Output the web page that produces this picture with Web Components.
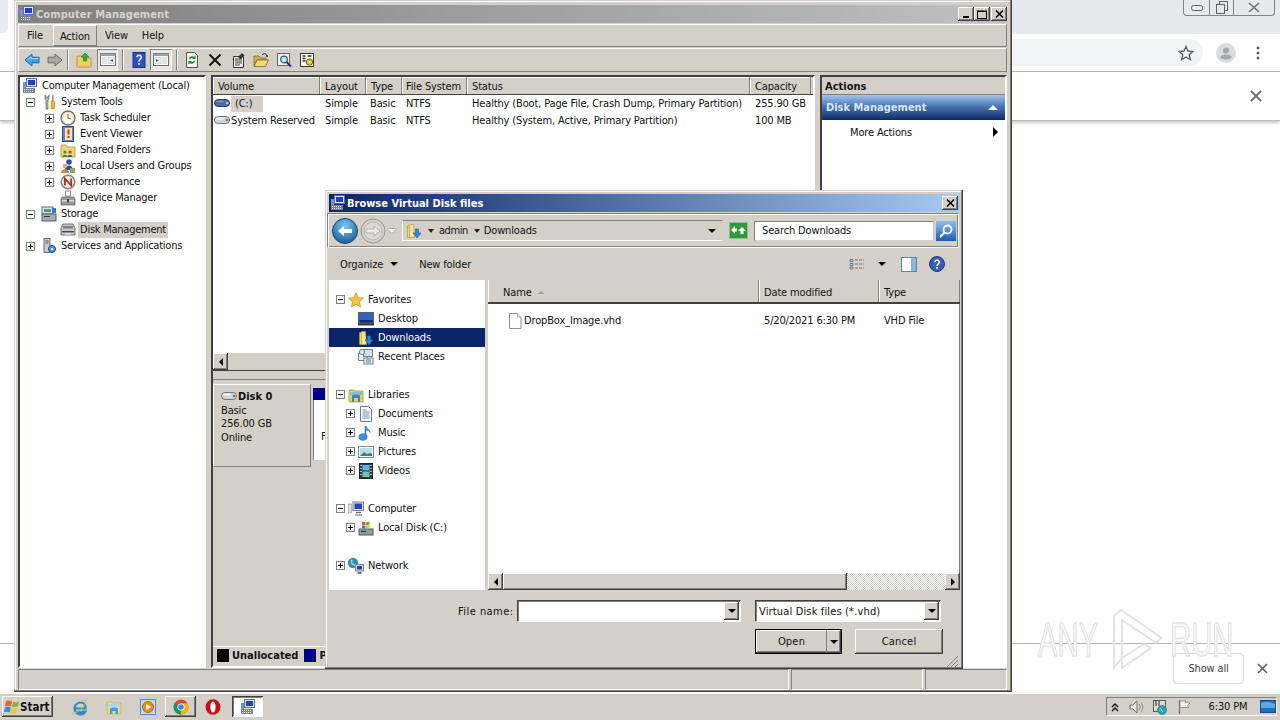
<!DOCTYPE html>
<html>
<head>
<meta charset="utf-8">
<title>Computer Management</title>
<style>
    html, body { margin: 0; padding: 0; width: 1280px; height: 720px; overflow: hidden; background: #fff; }
    body { position: relative; display: flex; flex-direction: column; font: 11px "DejaVu Sans Condensed", "DejaVu Sans", sans-serif; color: #111; letter-spacing: -.15px; }
</style>
</head>
<body>
<browser-backdrop></browser-backdrop>
<task-bar></task-bar>
<mmc-window></mmc-window>
<browse-dialog></browse-dialog>

<script>
// shared bits, pasted into each shadow root's own style
const BASE = `
    * { box-sizing: border-box; }
    :host { box-sizing: border-box; }
    .raised { background: #d4d0c8; box-shadow: inset -1px -1px 0 #404040, inset 1px 1px 0 #fff, inset -2px -2px 0 #808080; }
    .sunken { box-shadow: inset 1px 1px 0 #808080, inset -1px -1px 0 #fff, inset 2px 2px 0 #404040; }
    .tri-down { width: 0; height: 0; border-left: 4px solid transparent; border-right: 4px solid transparent; border-top: 4px solid #000; }
`;

const ICONS = {
    mmc: `<path d="M1 4h3v6H1z" fill="#6d92e0"/><rect x="4.500" y=".5" width="10" height="8" fill="#dbe2f5" stroke="#5a6ea8"/><rect x="6" y="2" width="7" height="5" fill="#2340b8"/><rect x="1" y="10" width="12" height="5" fill="#7d828c"/><path d="M2 11.500h10M2 13.500h10" stroke="#e6e8ec" stroke-dasharray="1 1"/>`,
    tools: `<path d="M4 1v4l1 1v9h2V6l1-1V1L7 3H5z" fill="#b4b4b4" stroke="#555" stroke-width=".6"/><rect x="10" y="7" width="3.500" height="8" rx="1" fill="#f0c010" stroke="#8a6a00" stroke-width=".5"/><rect x="11.200" y="1" width="1.200" height="6" fill="#777"/>`,
    clock: `<circle cx="8" cy="8" r="7" fill="#efe9d6" stroke="#77725f" stroke-width="1.400"/><circle cx="8" cy="8" r="5" fill="#fbfaf2"/><path d="M8 4v4l3 1" fill="none" stroke="#a87838" stroke-width="1.200"/>`,
    event: `<rect x="2.500" y=".5" width="11" height="15" fill="#6a84c8" stroke="#38488a"/><rect x="5" y="2" width="7" height="12" fill="#f4e6b0"/><path d="M8.500 3.500v5" stroke="#c83a20" stroke-width="2"/><rect x="7.500" y="10" width="2" height="2" fill="#c83a20"/>`,
    shared: `<path d="M1 3h5l1 2h8v10H1z" fill="#f2d576" stroke="#a98a34" stroke-width=".7"/><circle cx="5" cy="10" r="1.600" fill="#3a9a3a"/><path d="M2.500 15c0-3 5-3 5 0z" fill="#3a9a3a"/><circle cx="10" cy="10" r="1.600" fill="#c04838"/><path d="M7.500 15c0-3 5-3 5 0z" fill="#3858b0"/>`,
    users: `<circle cx="9" cy="4" r="2.800" fill="#2c4ea8"/><path d="M5 12c0-6 8-6 8 0z" fill="#2c4ea8"/><circle cx="5" cy="8" r="2.300" fill="#e0a860"/><path d="M1 15c0-5 8-5 8 0z" fill="#c88c30"/><path d="M10 10h5v5h-5z" fill="#8aa868"/>`,
    perf: `<circle cx="8" cy="8" r="6.800" fill="#f4f0e8" stroke="#8c8678" stroke-width="1.600"/><path d="M4.800 11.500v-7l6.400 7v-7" fill="none" stroke="#c82018" stroke-width="1.800"/>`,
    device: `<rect x="5.500" y="1" width="5" height="5" fill="none" stroke="#8a8a8a"/><path d="M2 7h12l1 2v6H1V9z" fill="#9a9c9e" stroke="#55585c" stroke-width=".7"/><rect x="2" y="10" width="12" height="1.400" fill="#dcdcdc"/><rect x="7" y="9" width="2" height="3.500" fill="#444"/>`,
    storage: `<rect x="1" y="1" width="11" height="7" fill="#dfe3e6" stroke="#6a6f74"/><rect x="3" y="3" width="7" height="3" fill="#32a0a8"/><rect x="1" y="8" width="14" height="7" fill="#a8adb2" stroke="#5a5f64"/><rect x="3" y="10" width="6" height="1" fill="#333"/><rect x="11" y="2" width="4" height="5" fill="#3a78c8"/>`,
    diskmgmt: `<path d="M3 2h10l2 4v7H1V6z" fill="#c6c8ca" stroke="#55585c" stroke-width=".8"/><rect x="3" y="4" width="10" height="2.500" fill="#7e8286"/><rect x="2" y="9" width="12" height="1.400" fill="#45484c"/><rect x="5" y="11.500" width="6" height="1" fill="#f4f4f4"/>`,
    services: `<rect x="3" y=".5" width="6" height="14" fill="#c8ccd0" stroke="#6a6e74"/><path d="M4.500 3h3M4.500 5h3" stroke="#555"/><circle cx="11" cy="11" r="3.600" fill="#4a8cc8" stroke="#2a5a94"/><circle cx="11" cy="11" r="1.300" fill="#dff0fa"/>`,
    back: `<path d="M1 8l7-6v3.200h7v5.600H8V14z" fill="#3ba4e4" stroke="#1d66ad"/><path d="M3.500 8L7 5v1.500h7" fill="none" stroke="#a8e0fa"/>`,
    fwd: `<path d="M15 8L8 2v3.200H1v5.600h7V14z" fill="#aba99f" stroke="#6f6d64"/>`,
    up: `<path d="M1 4h5l1 2h8v9H1z" fill="#f1cf63" stroke="#a58430" stroke-width=".7"/><path d="M9 1l4 4h-2.400v4H7.400V5H5z" fill="#3aa83a" stroke="#1f7a1f" stroke-width=".6"/>`,
    paneleft: `<rect x="1.500" y="2.500" width="15" height="12" fill="#fff" stroke="#6e6e6e"/><rect x="1.500" y="2.500" width="15" height="2.500" fill="#9aa0a8"/><rect x="3" y="6" width="5" height="7" fill="#dfe4ea"/><path d="M9 6.500h6v6H9z" fill="#f2f2f2" stroke="#b0b0b0" stroke-width=".5"/><path d="M14 8l-3 1.500 3 1.500z" fill="#2f7a4a"/>`,
    paneright: `<rect x="1.500" y="2.500" width="15" height="12" fill="#fff" stroke="#6e6e6e"/><rect x="1.500" y="2.500" width="15" height="2.500" fill="#9aa0a8"/><rect x="10" y="6" width="5" height="7" fill="#dfe4ea"/><path d="M3 6.500h6v6H3z" fill="#f2f2f2" stroke="#b0b0b0" stroke-width=".5"/><path d="M4 8l3 1.500-3 1.500z" fill="#2f7a4a"/>`,
    helpbook: `<rect x="2" y=".5" width="12" height="15" fill="#2b50c4" stroke="#182f84"/><path d="M6 5.300a2.100 2.100 0 1 1 3.200 1.800C8.200 7.700 8 8.200 8 9.600" fill="none" stroke="#fff" stroke-width="1.500"/><rect x="7.200" y="11" width="1.600" height="1.800" fill="#fff"/>`,
    refresh: `<path d="M2.500.5h8l3 3v12h-11z" fill="#f4f8f0" stroke="#555"/><path d="M5.500 7a3 3 0 0 1 5-1M10.500 9a3 3 0 0 1-5 1" fill="none" stroke="#1a8a2e" stroke-width="1.500"/><path d="M11.500 3.500v3.500H8zM4.500 12.500V9H8z" fill="#1a8a2e"/>`,
    del: `<path d="M2.500 2.500l11 11M13.500 2.500l-11 11" stroke="#111" stroke-width="1.900"/>`,
    props: `<path d="M3.500 4.500h10v11h-10z" fill="#fff" stroke="#333"/><path d="M5 7h7M5 9h7M5 11h7M5 13h5" stroke="#333"/><path d="M8 5l4-4 2.500 2.500-4 4z" fill="#333"/>`,
    open: `<path d="M1 4h5l1 2h6v2H4L1 14z" fill="#d8b448" stroke="#6e5a1c" stroke-width=".7"/><path d="M4 8h11.500l-3 6.500H1z" fill="#f2d878" stroke="#6e5a1c" stroke-width=".7"/><path d="M9 3c2-2 4-2 5 1" fill="none" stroke="#222"/><path d="M15 5l-2.500-.5 2-1.500z" fill="#222"/>`,
    find: `<rect x="1.500" y="1.500" width="12" height="12" fill="#f4f2e8" stroke="#666"/><circle cx="8" cy="7.500" r="3.300" fill="#bfe6f2" stroke="#225a7a" stroke-width="1.200"/><path d="M10.500 10l4.500 4.500" stroke="#2a2a9a" stroke-width="2"/>`,
    gearlist: `<rect x="1.500" y="1.500" width="13" height="13" fill="#fff" stroke="#333"/><path d="M3.500 4h3M3.500 6.500h3M3.500 9h3M8.500 4h4" stroke="#333" stroke-width="1.400"/><circle cx="10.500" cy="10" r="3.200" fill="#e8c020" stroke="#7a6400"/><circle cx="10.500" cy="10" r="1" fill="#fff"/>`,
    hddblue: `<rect x=".5" y="3.500" width="15" height="7" rx="3.500" fill="#4a6a98" stroke="#2c4468"/><ellipse cx="6" cy="5.500" rx="4" ry="1.200" fill="#6d8cb6"/><circle cx="13" cy="7" r="1.300" fill="#b8c8dc"/>`,
    hddgray: `<rect x=".5" y="3.500" width="15" height="7" rx="3.500" fill="#d4d5d6" stroke="#77797c"/><ellipse cx="6" cy="5.500" rx="4" ry="1.200" fill="#f2f2f2"/><circle cx="13" cy="7" r="1.300" fill="#707274"/>`,
    star: `<path d="M8 .8l2.200 4.800 5.200.6-3.900 3.500 1.100 5.200L8 12.300l-4.600 2.600 1.100-5.200L.6 6.200l5.200-.6z" fill="#f4c14a" stroke="#c88a20" stroke-width=".7"/>`,
    desktop: `<rect x=".5" y="1.500" width="15" height="11" fill="#2f62b8" stroke="#5a6068"/><rect x="1.500" y="9" width="13" height="2.500" fill="#10306c"/><rect x="0" y="12.500" width="16" height="2" fill="#3a3c40"/>`,
    folderdl: `<path d="M1.500 2.500h5v2l1 10h-6z" fill="#f4d86c" stroke="#b3963c" stroke-width=".6"/><path d="M3.500 1.500h4l1 13h-5z" fill="#f8e68c" stroke="#b3963c" stroke-width=".6"/><path d="M9.500 6h3v4h2.500L11 15l-4-5h2.500z" fill="#2a8ae0" stroke="#145aa8" stroke-width=".6"/>`,
    recent: `<rect x=".5" y="4.500" width="9" height="7" fill="#e8eef4" stroke="#7a8088"/><rect x="5.500" y=".5" width="9" height="7" fill="#d0e0f0" stroke="#7a8088"/><circle cx="4" cy="3" r="2.600" fill="#dfe6ee" stroke="#708090"/><rect x="6" y="9" width="9" height="6" fill="#eef2f6" stroke="#7a8088"/><path d="M8 11h5M8 13h5" stroke="#4a78a8"/>`,
    libs: `<path d="M1 3h5l1 1h8v11H1z" fill="#f0cc60" stroke="#a98a34" stroke-width=".7"/><path d="M2 5h12v3H2z" fill="#7cc4dc"/><path d="M4 15V9c0-2 8-2 8 0v6h-2v-4H6v4z" fill="#3a88b0"/>`,
    docs: `<path d="M2.500.5h8l3 3v12h-11z" fill="#f6f8fb" stroke="#6e7f94"/><path d="M4.500 4h4M4.500 6h7M4.500 8h7M4.500 10h7M4.500 12h7" stroke="#7c93ad"/>`,
    music: `<path d="M7.500 1v10.500" stroke="#2a78c0" stroke-width="1.600"/><ellipse cx="5" cy="12" rx="4.200" ry="3.300" fill="#3a90d8" stroke="#1a5a9c" stroke-width=".5"/><path d="M8 1c1 3 5 3.500 4.500 8-.5-2.500-2.500-3.500-4.500-3.500z" fill="#3a90d8"/>`,
    pics: `<rect x=".5" y="2.500" width="15" height="11" fill="#fff" stroke="#7a8a9a"/><rect x="2" y="4" width="12" height="8" fill="#bcdcec"/><path d="M2 12l4-4 3 2 3-1 2 1v2z" fill="#2e8a64"/>`,
    videos: `<rect x="1.500" y=".5" width="13" height="15" fill="#2a3c50" stroke="#182430"/><rect x="4.500" y="2" width="7" height="5.500" fill="#58b8d8"/><rect x="4.500" y="8.500" width="7" height="5.500" fill="#78c8a8"/><path d="M3 2v1M3 5v1M3 8v1M3 11v1M13 2v1M13 5v1M13 8v1M13 11v1" stroke="#e0e8f0" stroke-width="1.500"/>`,
    computer: `<rect x=".5" y="3" width="3" height="9" fill="#dfe3e8" stroke="#8a9098" stroke-width=".6"/><rect x="5" y="1" width="10.500" height="8.500" fill="#dbe2ea" stroke="#7a828c"/><rect x="6.500" y="2.500" width="7.500" height="5.500" fill="#2344c0"/><path d="M8 11.500h5" stroke="#777" stroke-width="1.500"/><path d="M7 14h7" stroke="#999" stroke-width="1.500"/>`,
    localdisk: `<rect x="1" y="9" width="14" height="6" fill="#8a9ca4" stroke="#4a5a64"/><rect x="3" y="11" width="5" height="1" fill="#25323a"/><path d="M4 1.500l3.500.8v3L4 4.800z" fill="#e05a2c"/><path d="M8 2.400l3.500-1v3l-3.500 1z" fill="#6ab02c"/><path d="M4 5.300l3.500.5v3L4 8.200z" fill="#2c80d8"/><path d="M8 5.800l3.500-.8v3l-3.500.8z" fill="#f0c020"/>`,
    network: `<circle cx="5" cy="5" r="4.800" fill="#2a90c0" stroke="#14607e" stroke-width=".5"/><path d="M3 2c2 1 0 3 1 4s3 0 3 2" fill="none" stroke="#aee08a" stroke-width="1.500"/><rect x="7.500" y="6.500" width="8" height="6.500" fill="#dde4ec" stroke="#70808c"/><rect x="9" y="8" width="5" height="3.500" fill="#1f3fb0"/><path d="M9.500 15h4" stroke="#444" stroke-width="1.500"/>`,
    file: `<path d="M1.500.5h8l3.500 3.500v11.500h-11.500z" fill="#fdfdfd" stroke="#8d8f92"/><path d="M9.500.5v3.500h3.500" fill="#eee" stroke="#aaa"/>`,
    winflag: `<path d="M2 2.500c2-1.500 3.500-1 6 0L7 7.500C4.500 6.500 3 6.500 1 7.500z" fill="#e8622a"/><path d="M9 2.700c2 1 3.500 1 6-.2l-1 4.800c-2.500 1-4 1-6 .2z" fill="#7fb82e"/><path d="M1 8.500c2-1 3.500-1 5.800 0l-1 5C3.500 12.500 2 12.500 0 13.500z" fill="#2d8ce0"/><path d="M7.800 8.700c2 1 3.500 1 5.900-.2l-1 5c-2.400 1.200-3.900 1.200-5.900.2z" fill="#f5c422"/>`,
    ie: `<path d="M3.500 9.500h10c.5-4-2-6-5-6s-6 2.500-6 6 3 6 6 6c2.500 0 4-1 5-3h-3c-1.500 1.500-4 1-4.500-1" fill="none" stroke="#2a8ad0" stroke-width="2.200"/><path d="M1.500 12C-1 16 3 15 8 11S15 2 14 1.500 11 1 9 2.500" fill="none" stroke="#e8b82c" stroke-width="1"/>`,
    libfolder: `<path d="M1 3h5l1 1h8v11H1z" fill="#f2d778" stroke="#c2a750" stroke-width=".6"/><path d="M2 5h12v3H2z" fill="#a8dce8"/><path d="M4 15V10c0-2 8-2 8 0v5h-2.500v-3h-3v3z" fill="#46a0c8"/>`,
    wmp: `<rect x=".5" y=".5" width="15" height="15" fill="#bfe0f4" stroke="#4a8ed0"/><circle cx="8" cy="8" r="5.500" fill="#f08a1c" stroke="#c06808"/><path d="M6.200 5l5 3-5 3z" fill="#fff"/>`,
    chrome: `<circle cx="8" cy="8" r="7.500" fill="#db4437"/><path d="M8 8L1.500 4.300A7.500 7.500 0 0 0 8 15.500l3.800-6.500z" fill="#0f9d58"/><path d="M8 8l-.2 7.500A7.500 7.500 0 0 0 14.500 4.300H8z" fill="#f4b400"/><circle cx="8" cy="8" r="3.600" fill="#fff"/><circle cx="8" cy="8" r="2.800" fill="#4285f4"/>`,
    opera: `<ellipse cx="8" cy="8" rx="7.500" ry="7.800" fill="#cc0f16"/><ellipse cx="8" cy="8" rx="2.600" ry="5.600" fill="#fff"/>`,
    chev: `<path d="M2 5l3-3 3 3M2 9l3-3 3 3" fill="none" stroke="#111" stroke-width="1.400"/>`,
    speaker: `<path d="M2 6h3l4-4v12l-4-4H2z" fill="#e8e6e0" stroke="#77756e"/><path d="M11 5c1.500 2 1.500 4 0 6M13 3.500c2.500 3 2.500 6 0 9" fill="none" stroke="#8a8880"/>`,
    net: `<rect x="1.500" y="1.500" width="12" height="11" fill="#dcdcd8" stroke="#5a5a58"/><path d="M4 1v6M7 1v6" stroke="#555" stroke-width="1.400"/><circle cx="10" cy="11" r="4.500" fill="#2aa5b4" stroke="#187080" stroke-width=".6"/><path d="M8 9c2 1 1 3 3 4" stroke="#a8ecc8" fill="none"/>`,
    flag: `<path d="M3.500 1v14" stroke="#77756e" stroke-width="1.300"/><path d="M4 2h6l-1 1.500 5 .5-2.500 2.500 1.500 2H4z" fill="#f2f0ea" stroke="#8a8880" stroke-width=".8"/>`,
    deskthumb: `<rect x=".5" y="1.500" width="15" height="12" fill="#1f6fc0" stroke="#1a4a80"/><path d="M1 4c5-2 10-1 14 1v4H1z" fill="#5ea8e4"/>`
};

class UiIcon extends HTMLElement {
    constructor() {
        super();
        this.attachShadow({ mode: 'open' });
    }

    connectedCallback() {
        const size = this.getAttribute('size') || 16;
        const body = ICONS[this.getAttribute('name')] || '';
        this.shadowRoot.innerHTML = `
            <style>
                :host { display: inline-flex; flex: none; width: ${size}px; height: ${size}px; }
                svg { display: block; overflow: visible; }
            </style>
            <svg width="${size}" height="${size}" viewBox="0 0 ${this.getAttribute('box') || 16} ${this.getAttribute('box') || 16}">${body}</svg>
        `;
    }
}

class TreeRow extends HTMLElement {
    constructor() {
        super();
        this.attachShadow({ mode: 'open' });
    }

    connectedCallback() {
        const exp = this.getAttribute('exp');
        const hasCell = this.hasAttribute('exp') || this.hasAttribute('cell');
        const box = exp ? `
            <svg class="exp" width="9" height="9" viewBox="0 0 9 9">
                <rect x=".5" y=".5" width="8" height="8" fill="#fff" stroke="#808080"/>
                <path d="M2 4.500h5${exp === 'plus' ? 'M4.500 2v5' : ''}" stroke="#000"/>
            </svg>` : '';
        this.shadowRoot.innerHTML = `
            <style>
                :host {
                    display: flex;
                    align-items: center;
                    height: var(--row-h, 16px);
                    padding-left: ${this.getAttribute('indent') || 0}px;
                }
                :host([sel="row"]) { background: #0a246a; color: #fff; }
                .cell { flex: none; width: var(--exp-w, 19px); display: flex; align-items: center; }
                .exp { margin-left: 4px; display: block; }
                .label { margin-left: 2px; padding: 0 2px; line-height: 16px; white-space: nowrap; }
                :host([sel="label"]) .label { background: #d4d0c8; }
            </style>
            ${hasCell ? `<span class="cell">${box}</span>` : ''}
            ${this.getAttribute('icon') ? `<ui-icon name="${this.getAttribute('icon')}"></ui-icon>` : ''}
            <span class="label"><slot></slot></span>
        `;
    }
}

class HScroll extends HTMLElement {
    constructor() {
        super();
        this.attachShadow({ mode: 'open' });
    }

    connectedCallback() {
        const thumb = this.getAttribute('thumb');
        this.shadowRoot.innerHTML = `
            <style>
                ${BASE}
                :host { display: flex; flex: none; height: 17px; background: #d4d0c8; }
                .btn { flex: none; width: 15px; display: flex; align-items: center; justify-content: center; }
                .left { width: 0; height: 0; border-top: 4px solid transparent; border-bottom: 4px solid transparent; border-right: 4px solid #000; }
                .right { width: 0; height: 0; border-top: 4px solid transparent; border-bottom: 4px solid transparent; border-left: 4px solid #000; }
                .thumb { flex: none; width: ${thumb || 0}px; }
                .track { flex: 1; background: repeating-conic-gradient(#fff 0 25%, #d4d0c8 0 50%) 0 0 / 2px 2px; }
            </style>
            <span class="btn raised"><span class="left"></span></span>
            ${thumb ? `<span class="thumb raised"></span><span class="track"></span><span class="btn raised"><span class="right"></span></span>` : ''}
        `;
    }
}

class BrowserBackdrop extends HTMLElement {
    constructor() {
        super();
        this.attachShadow({ mode: 'open' });
        this.shadowRoot.innerHTML = `
            <style>
                ${BASE}
                :host { display: flex; flex-direction: column; flex: none; height: 693px; background: #fff; }
                .strip { flex: none; height: 34px; background: #e7eaed; display: flex; }
                .strip-left { flex: none; width: 14px; background: #fff; }
                .chip { width: 8px; height: 33px; background: #e9ebee; border-radius: 0 0 6px 0; }
                .caption { margin-left: auto; margin-right: 5px; width: 92px; height: 16px; display: flex; border: 1px solid #7f858b; border-top: 0; border-radius: 0 0 4px 4px; background: #e7eaed; }
                .caption span { display: flex; align-items: center; justify-content: center; border-right: 1px solid #7f858b; }
                .caption span:last-child { border-right: 0; flex: 1; }
                .bar { flex: none; height: 38px; border-bottom: 1px solid #b5b7ba; display: flex; align-items: center; padding-left: 14px; }
                .pill { width: 1189px; height: 27px; border-radius: 14px; background: #f1f3f4; display: flex; align-items: center; justify-content: flex-end; padding-right: 9px; }
                .avatar { margin-left: 13px; }
                .dots { margin-left: 20px; }
                .info { flex: none; height: 49px; border-bottom: 1px solid #bdbdbd; box-shadow: 0 2px 3px rgba(0,0,0,.22); display: flex; align-items: center; justify-content: flex-end; padding-right: 18px; }
                .rest { flex: 1; }
                .shelf { flex: none; height: 50px; border-top: 1px solid #b9b9b9; display: flex; align-items: center; justify-content: flex-end; padding-right: 12px; }
                .showall { width: 71px; height: 31px; border: 1px solid #dadce0; border-radius: 4px; color: #3c4043; display: flex; align-items: center; justify-content: center; font-size: 11px; }
                .closer { margin-left: 13px; display: block; }
                .mark { position: absolute; left: 1038px; top: 608px; height: 62px; display: flex; align-items: center; color: #f7f7f7; font: 48px "Liberation Sans", sans-serif; letter-spacing: 0; -webkit-text-stroke: 1.500px #e4e4e4; filter: blur(.5px); pointer-events: none; }
                .mark span { display: inline-block; width: 62px; transform: scaleX(.61); transform-origin: left; white-space: nowrap; }
                .mark svg { margin: 0 7px 0 13px; flex: none; }
            </style>
            <div class="strip">
                <div class="strip-left"><div class="chip"></div></div>
                <div class="caption">
                    <span style="width:26px"><svg width="12" height="6"><rect x=".5" y=".5" width="11" height="5" rx="2" fill="none" stroke="#5f6368"/></svg></span>
                    <span style="width:24px"><svg width="12" height="13" fill="none" stroke="#5f6368"><rect x="3.500" y=".5" width="8" height="9"/><rect x=".5" y="3.500" width="8" height="9" fill="#e7eaed"/></svg></span>
                    <span><svg width="12" height="11" stroke="#6a6e73" stroke-width="1.600"><path d="M1 1l10 9M11 1L1 10"/></svg></span>
                </div>
            </div>
            <div class="bar">
                <div class="pill">
                    <svg width="16" height="16" viewBox="0 0 16 16"><path d="M8 1.500l2 4.500 4.900.5-3.700 3.200 1.100 4.800L8 12l-4.300 2.500 1.100-4.800L1.100 6.500 6 6z" fill="none" stroke="#5f6368" stroke-width="1.400"/></svg>
                </div>
                <svg class="avatar" width="20" height="20" viewBox="0 0 20 20"><circle cx="10" cy="10" r="10" fill="#dadce0"/><circle cx="10" cy="7.500" r="3" fill="#a4a7ab"/><path d="M4 14.500c1-4 11-4 12 0-2 2.500-10 2.500-12 0z" fill="#a4a7ab"/></svg>
                <svg class="dots" width="4" height="14" viewBox="0 0 4 14" fill="#5f6368"><circle cx="2" cy="2" r="1.500"/><circle cx="2" cy="7" r="1.500"/><circle cx="2" cy="12" r="1.500"/></svg>
            </div>
            <div class="info">
                <svg width="12" height="12" stroke="#6a6e73" stroke-width="1.800"><path d="M1 1l10 10M11 1L1 11"/></svg>
            </div>
            <div class="rest"></div>
            <div class="shelf">
                <div class="showall">Show all</div>
                <svg class="closer" width="11" height="11" stroke="#5f6368" stroke-width="1.700"><path d="M1 1l9 9M10 1L1 10"/></svg>
            </div>
            <div class="mark">
                <span>ANY</span>
                <svg width="50" height="62" viewBox="0 0 50 62" fill="none" stroke="#e2e2e2" stroke-width="1.800"><path d="M1 60V8l7-6 41 28-6 5L9 12v38zM9 50l22-14 7 4-29 20z"/></svg>
                <span>RUN</span>
            </div>
        `;
    }
}

class TaskBar extends HTMLElement {
    constructor() {
        super();
        this.attachShadow({ mode: 'open' });
        this.shadowRoot.innerHTML = `
            <style>
                ${BASE}
                :host { display: flex; flex: none; height: 27px; align-items: center; background: #d4d0c8; box-shadow: inset 0 1px 0 #fff; padding-left: 2px; position: relative; }
                .start { flex: none; width: 51px; height: 21px; display: flex; align-items: center; padding-left: 2px; font-weight: bold; font-size: 11.500px; letter-spacing: 0; }
                .ql { flex: none; width: 34px; display: flex; justify-content: center; }
                .btn { flex: none; width: 31px; height: 21px; display: flex; align-items: center; justify-content: center; }
                .active { margin-left: 2px; background: #fff; box-shadow: inset 1px 1px 0 #404040, inset -1px -1px 0 #fff, inset 2px 2px 0 #808080; }
                .tray { margin-left: auto; margin-right: 3px; width: 171px; height: 19px; display: grid; grid-template-columns: 16px 25px 24px 24px 64px 16px; align-items: center; justify-items: center; border: 1px solid; border-color: #808080 #fff #fff #808080; }
            </style>
            <div class="start raised"><ui-icon name="winflag"></ui-icon><span>Start</span></div>
            <span class="ql" style="margin-left:10px"><ui-icon name="ie"></ui-icon></span>
            <span class="ql"><ui-icon name="libfolder"></ui-icon></span>
            <span class="ql"><ui-icon name="wmp"></ui-icon></span>
            <span class="btn raised"><ui-icon name="chrome"></ui-icon></span>
            <span class="ql"><ui-icon name="opera"></ui-icon></span>
            <span class="btn active"><ui-icon name="mmc"></ui-icon></span>
            <div class="tray">
                <ui-icon name="chev" size="10" box="10"></ui-icon>
                <ui-icon name="speaker"></ui-icon>
                <ui-icon name="net"></ui-icon>
                <ui-icon name="flag"></ui-icon>
                <span>6:30 PM</span>
                <ui-icon name="deskthumb"></ui-icon>
            </div>
        `;
    }
}

class MmcWindow extends HTMLElement {
    constructor() {
        super();
        this.attachShadow({ mode: 'open' });
        this.shadowRoot.innerHTML = `
            <style>
                ${BASE}
                :host {
                    position: absolute; left: 14px; top: 0; width: 998px; height: 692px;
                    display: flex; flex-direction: column;
                    padding: 5px 5px 2px 4px;
                    background: #d4d0c8;
                    box-shadow: inset -1px -1px 0 #404040, inset -2px -2px 0 #808080, inset 1px 1px 0 #d4d0c8, inset 2px 2px 0 #fff;
                }
                .title { flex: none; height: 18px; background: linear-gradient(90deg, #808080, #c0c0c0); color: #d8d4cc; font-weight: bold; letter-spacing: .1px; display: flex; align-items: center; padding-left: 1px; gap: 1px; }
                .caption { margin-left: auto; display: flex; margin-right: 0; }
                .cbtn { width: 16px; height: 14px; display: flex; align-items: center; justify-content: center; }
                .cbtn + .cbtn + .cbtn { margin-left: 1px; }
                .menu { flex: none; height: 23px; margin-top: 1px; display: flex; align-items: stretch; border: 1px solid; border-color: #fff #808080 #808080 #fff; }
                .menu span { display: flex; align-items: center; }
                .menu .on { border: 1px solid; border-color: #fff #808080 #808080 #fff; padding: 1px 6px 0; margin-left: 1px; }
                .tools { flex: none; height: 24px; margin-top: 1px; display: flex; align-items: center; padding-left: 1px; border: 1px solid; border-color: #fff #808080 #808080 #fff; }
                .tb { flex: none; width: 23px; display: flex; justify-content: center; }
                .sep { flex: none; width: 2px; height: 20px; border-left: 1px solid #808080; border-right: 1px solid #fff; }
                .press { flex: none; height: 22px; display: flex; align-items: center; justify-content: center; border: 1px solid; border-color: #808080 #fff #fff #808080; background: #ebe9e4; }
                .main { flex: none; height: 593px; margin-top: 3px; display: flex; gap: 5px; }
                .pane { border: 2px solid; border-color: #404040 #fff #fff #404040; background: #fff; }
                .tree { flex: none; width: 188px; padding-top: 1px; letter-spacing: -.24px; }
                .center { flex: none; width: 604px; display: flex; flex-direction: column; background: #d4d0c8; }
                .actions { flex: none; width: 187px; }
                .list { flex: none; height: 293px; display: flex; flex-direction: column; background: #fff; }
                .grid { display: grid; grid-template-columns: 107px 46px 36px 65px 283px 61px; }
                .head { flex: none; height: 18px; background: #d4d0c8; border-bottom: 1px solid #404040; }
                .head span { padding: 2px 0 0 5px; border-right: 1px solid #808080; box-shadow: inset 1px 1px 0 #fff; line-height: 15px; white-space: nowrap; }
                .head span:nth-child(4) { padding-left: 4px; }
                .rows { flex: 1; }
                .row { height: 17px; align-items: center; }
                .row > span { padding-left: 5px; white-space: nowrap; }
                .row > span:nth-child(3), .row > span:nth-child(4) { padding-left: 4px; }
                .row > .vol { padding: 0 0 0 1px; display: flex; align-items: center; }
                .hi { background: #d4d0c8; padding: 0 11px 0 4px; margin-right: 1px; line-height: 16px; }
                .split { flex: none; height: 10px; margin-top: 0; border-bottom: 1px solid #808080; box-shadow: inset 0 1px 0 #404040; }
                .lower { flex: 1; padding: 4px 0 0 0; display: flex; flex-direction: column; }
                .disk { flex: none; height: 83px; display: flex; gap: 2px; }
                .dbox { flex: none; width: 98px; padding: 5px 0 0 7px; line-height: 13.400px; border: 1px solid; border-color: #fff #808080 #808080 #fff; }
                .dname { display: flex; align-items: center; font-weight: bold; letter-spacing: 0; height: 14px; gap: 1px; }
                .part { flex: 1; padding-top: 4px; overflow: hidden; background: #d4d0c8; }
                .ptop { height: 12px; background: #00008b; }
                .pbody { height: 60px; background: #fff; border-left: 1px solid #808080; padding: 30px 0 0 7px; }
                .legend { margin-top: auto; flex: none; height: 20px; display: flex; align-items: center; padding: 0 0 3px 4px; font-weight: bold; letter-spacing: 0; border-top: 1px solid #fff; }
                .sw { flex: none; width: 12px; height: 13px; margin-right: 3px; }
                .a-head { height: 18px; background: #d4d0c8; font-weight: bold; letter-spacing: 0; padding: 2px 0 0 3px; border-bottom: 1px solid #808080; line-height: 15px; }
                .a-blue { height: 25px; margin-top: 0; background: linear-gradient(#a3c4ec, #4a76b4 45%, #0e2a68); color: #dde7f4; font-weight: bold; letter-spacing: 0; display: flex; align-items: center; justify-content: space-between; padding: 0 7px 0 4px; }
                .a-up { width: 0; height: 0; border-left: 5px solid transparent; border-right: 5px solid transparent; border-bottom: 5px solid #fff; }
                .a-more { height: 24px; display: flex; align-items: center; justify-content: space-between; padding: 0 7px 0 28px; }
                .a-arr { width: 0; height: 0; border-top: 5px solid transparent; border-bottom: 5px solid transparent; border-left: 5px solid #000; }
                .status { flex: none; height: 21px; margin-top: 1px; display: grid; grid-template-columns: 771px 132px 1fr; gap: 2px; }
                .status span { border: 1px solid; border-color: #808080 #fff #fff #808080; }
            </style>
            <div class="title">
                <ui-icon name="mmc"></ui-icon><span>Computer Management</span>
                <div class="caption">
                    <span class="cbtn raised"><svg width="8" height="8"><rect x="1" y="6" width="6" height="2"/></svg></span>
                    <span class="cbtn raised"><svg width="10" height="9" fill="none" stroke="#000"><rect x=".5" y="1" width="9" height="7.500"/><path d="M0 1.500h10"/></svg></span>
                    <span class="cbtn raised"><svg width="9" height="8" stroke="#000" stroke-width="1.500"><path d="M1 .5l7 7M8 .5l-7 7"/></svg></span>
                </div>
            </div>
            <div class="menu">
                <span style="padding:0 9px 0 8px">File</span>
                <span class="on">Action</span>
                <span style="padding:0 7px 0 8px">View</span>
                <span style="padding:0 8px 0 7px">Help</span>
            </div>
            <div class="tools">
                <span class="tb"><ui-icon name="back"></ui-icon></span>
                <span class="tb"><ui-icon name="fwd"></ui-icon></span>
                <span class="sep" style="margin-left:1px"></span>
                <span class="tb" style="margin-left:3px"><ui-icon name="up"></ui-icon></span>
                <span class="press" style="width:21px;margin-left:2px"><ui-icon name="paneleft" size="18" box="18"></ui-icon></span>
                <span class="sep" style="margin-left:4px"></span>
                <span class="tb" style="margin-left:3px"><ui-icon name="helpbook"></ui-icon></span>
                <span class="press" style="width:22px"><ui-icon name="paneright" size="18" box="18"></ui-icon></span>
                <span class="sep" style="margin-left:4px"></span>
                <span class="tb" style="margin-left:2px"><ui-icon name="refresh"></ui-icon></span>
                <span class="tb"><ui-icon name="del"></ui-icon></span>
                <span class="tb"><ui-icon name="props"></ui-icon></span>
                <span class="tb"><ui-icon name="open"></ui-icon></span>
                <span class="tb"><ui-icon name="find"></ui-icon></span>
                <span class="tb"><ui-icon name="gearlist"></ui-icon></span>
            </div>
            <div class="main">
                <div class="pane tree">
                    <tree-row indent="2" icon="mmc">Computer Management (Local)</tree-row>
                    <tree-row indent="2" exp="minus" icon="tools">System Tools</tree-row>
                    <tree-row indent="21" exp="plus" icon="clock">Task Scheduler</tree-row>
                    <tree-row indent="21" exp="plus" icon="event">Event Viewer</tree-row>
                    <tree-row indent="21" exp="plus" icon="shared">Shared Folders</tree-row>
                    <tree-row indent="21" exp="plus" icon="users">Local Users and Groups</tree-row>
                    <tree-row indent="21" exp="plus" icon="perf">Performance</tree-row>
                    <tree-row indent="21" cell icon="device">Device Manager</tree-row>
                    <tree-row indent="2" exp="minus" icon="storage">Storage</tree-row>
                    <tree-row indent="21" cell icon="diskmgmt" sel="label">Disk Management</tree-row>
                    <tree-row indent="2" exp="plus" icon="services">Services and Applications</tree-row>
                </div>
                <div class="pane center">
                    <div class="list">
                        <div class="grid head">
                            <span>Volume</span><span>Layout</span><span>Type</span><span>File System</span><span>Status</span><span>Capacity</span>
                        </div>
                        <div class="rows">
                            <div class="grid row">
                                <span class="vol"><ui-icon name="hddblue"></ui-icon><span class="hi" style="margin-left:1px">(C:)</span></span><span>Simple</span><span>Basic</span><span>NTFS</span><span>Healthy (Boot, Page File, Crash Dump, Primary Partition)</span><span>255.90 GB</span>
                            </div>
                            <div class="grid row">
                                <span class="vol"><ui-icon name="hddgray"></ui-icon><span style="margin-left:1px">System Reserved</span></span><span>Simple</span><span>Basic</span><span>NTFS</span><span>Healthy (System, Active, Primary Partition)</span><span>100 MB</span>
                            </div>
                        </div>
                        <h-scroll></h-scroll>
                    </div>
                    <div class="split"></div>
                    <div class="lower">
                        <div class="disk">
                            <div class="dbox">
                                <div class="dname"><ui-icon name="hddgray"></ui-icon><span>Disk 0</span></div>
                                <div>Basic</div><div>256.00 GB</div><div>Online</div>
                            </div>
                            <div class="part"><div class="ptop"></div><div class="pbody">F</div></div>
                        </div>
                        <div class="legend"><span class="sw" style="background:#000"></span><span>Unallocated</span><span class="sw" style="background:#00008b;margin-left:6px"></span><span>P</span></div>
                    </div>
                </div>
                <div class="pane actions">
                    <div class="a-head">Actions</div>
                    <div class="a-blue"><span>Disk Management</span><span class="a-up"></span></div>
                    <div class="a-more"><span>More Actions</span><span class="a-arr"></span></div>
                </div>
            </div>
            <div class="status"><span></span><span></span><span></span></div>
        `;
    }
}

class BrowseDialog extends HTMLElement {
    constructor() {
        super();
        this.attachShadow({ mode: 'open' });
        this.shadowRoot.innerHTML = `
            <style>
                ${BASE}
                :host {
                    position: absolute; left: 325px; top: 190px; width: 638px; height: 479px;
                    display: flex; flex-direction: column;
                    padding: 4px 3px 0 4px;
                    background: #d4d0c8;
                    --row-h: 19px;
                    --exp-w: 16px;
                    box-shadow: inset -1px -1px 0 #404040, inset -2px -2px 0 #808080, inset 1px 1px 0 #d4d0c8, inset 2px 2px 0 #fff;
                }
                .title { flex: none; height: 18px; background: linear-gradient(90deg, #0a246a, #a6caf0); color: #fff; font-weight: bold; letter-spacing: 0; display: flex; align-items: center; padding-left: 1px; gap: 1px; }
                .x { margin-left: auto; margin-right: 2px; width: 16px; height: 14px; display: flex; align-items: center; justify-content: center; }
                .nav { flex: none; height: 35px; margin-top: 1px; margin-left: -2px; margin-right: 1px; display: flex; align-items: center; padding-left: 4px; border: 1px solid; border-color: #808080 #fff #fff #808080; box-shadow: inset 1px 1px 0 #fff, inset -1px -1px 0 #808080; }
                .ball { flex: none; display: block; }
                .ball + .ball { margin-left: 2px; }
                .ddn { flex: none; margin-left: 2px; width: 0; height: 0; border-left: 4px solid transparent; border-right: 4px solid transparent; border-top: 4px solid #fff; filter: drop-shadow(0 0 1px #666); margin-right: 6px; }
                .addr { flex: none; width: 321px; height: 21px; display: flex; align-items: center; padding-left: 3px; border: 1px solid; border-color: #808080 #d4d0c8 #fff #fff; }
                .crumb { width: 0; height: 0; border-left: 3px solid transparent; border-right: 3px solid transparent; border-top: 4px solid #222; margin: 0 4px 0 6px; }
                .addr .first { margin-right: 5px; }
                .addr .admin { letter-spacing: -.45px; }
                .addr .end { margin-left: auto; margin-right: 6px; }
                .go { flex: none; margin-left: 6px; width: 19px; height: 17px; background: #2f9a3c; border: 1px solid #8fc090; display: flex; align-items: center; justify-content: center; }
                .search { flex: none; margin-left: 6px; width: 180px; height: 20px; background: #fff; padding-left: 7px; display: flex; align-items: center; border: 1px solid; border-color: #808080 #d4d0c8 #d4d0c8 #808080; }
                .sbtn { flex: none; margin-left: 2px; width: 20px; height: 20px; background: linear-gradient(#8ec0ee, #1d5cb0); display: flex; align-items: center; justify-content: center; }
                .bar { flex: none; height: 32px; display: flex; align-items: center; padding-left: 11px; }
                .bar .tri-down { margin-left: 7px; }
                .panes { flex: none; height: 310px; display: flex; gap: 3px; }
                .navpane { flex: none; width: 156px; background: #fff; padding-top: 10px; }
                .listpane { flex: none; width: 472px; background: #fff; display: flex; flex-direction: column; box-shadow: inset -1px 0 0 #808080; }
                .grid { display: grid; grid-template-columns: 271px 120px 81px; }
                .head { flex: none; height: 24px; background: #d4d0c8; border-bottom: 2px solid #404040; }
                .head > span { display: flex; align-items: center; border-right: 1px solid #808080; box-shadow: inset 1px 0 0 #fff; padding: 2px 0 0 5px; }
                .up { width: 0; height: 0; border-left: 3px solid transparent; border-right: 3px solid transparent; border-bottom: 3px solid #999; margin-left: 6px; }
                .rows { flex: 1; padding-top: 7px; }
                .frow { height: 19px; align-items: center; }
                .frow > span { padding-left: 5px; white-space: nowrap; }
                .frow > .fname { display: flex; align-items: center; padding-left: 20px; gap: 0; }
                .bottom { flex: 1; position: relative; padding: 10px 0 0 0; }
                .fields { display: grid; grid-template-columns: 129px 55px 4px 224px 14px 186px; align-items: center; height: 22px; }
                .lab { grid-column: 2; text-align: right; white-space: nowrap; letter-spacing: .45px; }
                .combo { height: 22px; background: #fff; display: flex; align-items: center; padding: 1px 1px 1px 4px; border: 1px solid; border-color: #404040 #fff #fff #404040; box-shadow: inset 1px 1px 0 #808080; }
                .combo > span:first-child { flex: 1; white-space: nowrap; letter-spacing: .15px; }
                .dd { flex: none; width: 15px; height: 18px; display: flex; align-items: center; justify-content: center; }
                .btns { display: flex; margin-top: 7px; padding-left: 426px; gap: 13px; }
                .b { height: 25px; display: flex; align-items: center; justify-content: center; }
                .open { width: 87px; border: 1px solid #000; padding: 0 0 0 1px; }
                .open .txt { flex: 1; text-align: center; letter-spacing: .2px; }
                .open .dd { height: 100%; width: 15px; border-left: 1px solid #808080; }
                .cancel { width: 88px; letter-spacing: .2px; }
                .grip { position: absolute; right: 1px; bottom: 1px; display: block; }
            </style>
            <div class="title">
                <ui-icon name="mmc"></ui-icon><span>Browse Virtual Disk files</span>
                <span class="x raised"><svg width="9" height="8" stroke="#000" stroke-width="1.500"><path d="M1 .5l7 7M8 .5l-7 7"/></svg></span>
            </div>
            <div class="nav">
                <svg class="ball" width="26" height="26" viewBox="0 0 26 26">
                    <defs><radialGradient id="bg" cy=".3" r=".8"><stop offset="0" stop-color="#7cc8ee"/><stop offset="1" stop-color="#0c4f90"/></radialGradient></defs>
                    <circle cx="13" cy="13" r="12.500" fill="url(#bg)" stroke="#16476f"/>
                    <path d="M6 13l6-5v3h8v4h-8v3z" fill="#fff"/>
                </svg>
                <svg class="ball" width="26" height="26" viewBox="0 0 26 26">
                    <circle cx="13" cy="13" r="12" fill="#d4d0c8" stroke="#96938c"/>
                    <circle cx="13" cy="13" r="9" fill="#dcd9d2" stroke="#bcb9b2"/>
                    <path d="M20 13l-6-5v3H6v4h8v3z" fill="#ece9e2" stroke="#b4b1aa"/>
                </svg>
                <span class="ddn"></span>
                <div class="addr">
                    <ui-icon name="folderdl"></ui-icon>
                    <span class="crumb first"></span><span class="admin">admin</span>
                    <span class="crumb"></span><span>Downloads</span>
                    <span class="tri-down end"></span>
                </div>
                <span class="go"><svg width="15" height="11" viewBox="0 0 15 11" fill="#fff"><path d="M0 5l4-4v2.500h2v3H4V9zM15 6l-4-4-4 4h2.500v3h3V6z"/></svg></span>
                <div class="search">Search Downloads</div>
                <span class="sbtn"><svg width="16" height="16" viewBox="0 0 16 16" fill="none" stroke="#fff" stroke-width="1.800"><circle cx="9.500" cy="6.500" r="4"/><path d="M6.500 9.500L2 14"/></svg></span>
            </div>
            <div class="bar">
                <span>Organize</span><span class="tri-down"></span>
                <span style="margin-left:21px">New folder</span>
                <svg style="margin-left:auto" width="16" height="12" viewBox="0 0 16 12" fill="none" stroke="#6c7a88"><path d="M1 1.500h3v2H1zM1 5.500h3v2H1zM1 9h3v2H1z"/><path d="M6 2h9M6 6h9M6 10h9" stroke-dasharray="3 1"/></svg>
                <span class="tri-down" style="margin-left:13px;margin-right:15px"></span>
                <svg width="16" height="15" viewBox="0 0 16 15"><rect x=".5" y=".5" width="15" height="14" fill="#fff" stroke="#5a84a8"/><rect x="10" y="1" width="5" height="13" fill="#8ab8d8"/></svg>
                <svg style="margin-left:12px;margin-right:15px" width="16" height="16" viewBox="0 0 16 16"><circle cx="8" cy="8" r="7.500" fill="#3a5cb0" stroke="#22397c"/><path d="M6 6.200a2.100 2.100 0 1 1 3.200 1.800C8.300 8.600 8 9 8 10" fill="none" stroke="#fff" stroke-width="1.500"/><rect x="7.200" y="11" width="1.600" height="1.700" fill="#fff"/></svg>
            </div>
            <div class="panes">
                <div class="navpane">
                    <tree-row indent="3" exp="minus" icon="star">Favorites</tree-row>
                    <tree-row indent="13" cell icon="desktop">Desktop</tree-row>
                    <tree-row indent="13" cell icon="folderdl" sel="row">Downloads</tree-row>
                    <tree-row indent="13" cell icon="recent">Recent Places</tree-row>
                    <tree-row></tree-row>
                    <tree-row indent="3" exp="minus" icon="libs">Libraries</tree-row>
                    <tree-row indent="13" exp="plus" icon="docs">Documents</tree-row>
                    <tree-row indent="13" exp="plus" icon="music">Music</tree-row>
                    <tree-row indent="13" exp="plus" icon="pics">Pictures</tree-row>
                    <tree-row indent="13" exp="plus" icon="videos">Videos</tree-row>
                    <tree-row></tree-row>
                    <tree-row indent="3" exp="minus" icon="computer">Computer</tree-row>
                    <tree-row indent="13" exp="plus" icon="localdisk">Local Disk (C:)</tree-row>
                    <tree-row></tree-row>
                    <tree-row indent="3" exp="plus" icon="network">Network</tree-row>
                </div>
                <div class="listpane">
                    <div class="grid head">
                        <span style="padding-left:15px">Name<span class="up"></span></span><span>Date modified</span><span>Type</span>
                    </div>
                    <div class="rows">
                        <div class="grid frow">
                            <span class="fname"><ui-icon name="file"></ui-icon><span>DropBox_Image.vhd</span></span><span>5/20/2021 6:30 PM</span><span>VHD File</span>
                        </div>
                    </div>
                    <h-scroll thumb="344"></h-scroll>
                </div>
            </div>
            <div class="bottom">
                <div class="fields">
                    <span class="lab">File name:</span>
                    <div class="combo" style="grid-column:4"><span></span><span class="dd raised"><span class="tri-down"></span></span></div>
                    <div class="combo" style="grid-column:6;padding-left:3px"><span>Virtual Disk files (*.vhd)</span><span class="dd raised"><span class="tri-down"></span></span></div>
                </div>
                <div class="btns">
                    <div class="b open raised"><span class="txt">Open</span><span class="dd"><span class="tri-down"></span></span></div>
                    <div class="b cancel raised">Cancel</div>
                </div>
                <svg class="grip" width="14" height="14" stroke="#808080"><path d="M13 2L2 13M13 6l-7 7M13 10l-3 3"/></svg>
            </div>
        `;
    }
}

customElements.define('ui-icon', UiIcon);
customElements.define('tree-row', TreeRow);
customElements.define('h-scroll', HScroll);
customElements.define('browser-backdrop', BrowserBackdrop);
customElements.define('task-bar', TaskBar);
customElements.define('mmc-window', MmcWindow);
customElements.define('browse-dialog', BrowseDialog);
</script>
</body>
</html>
